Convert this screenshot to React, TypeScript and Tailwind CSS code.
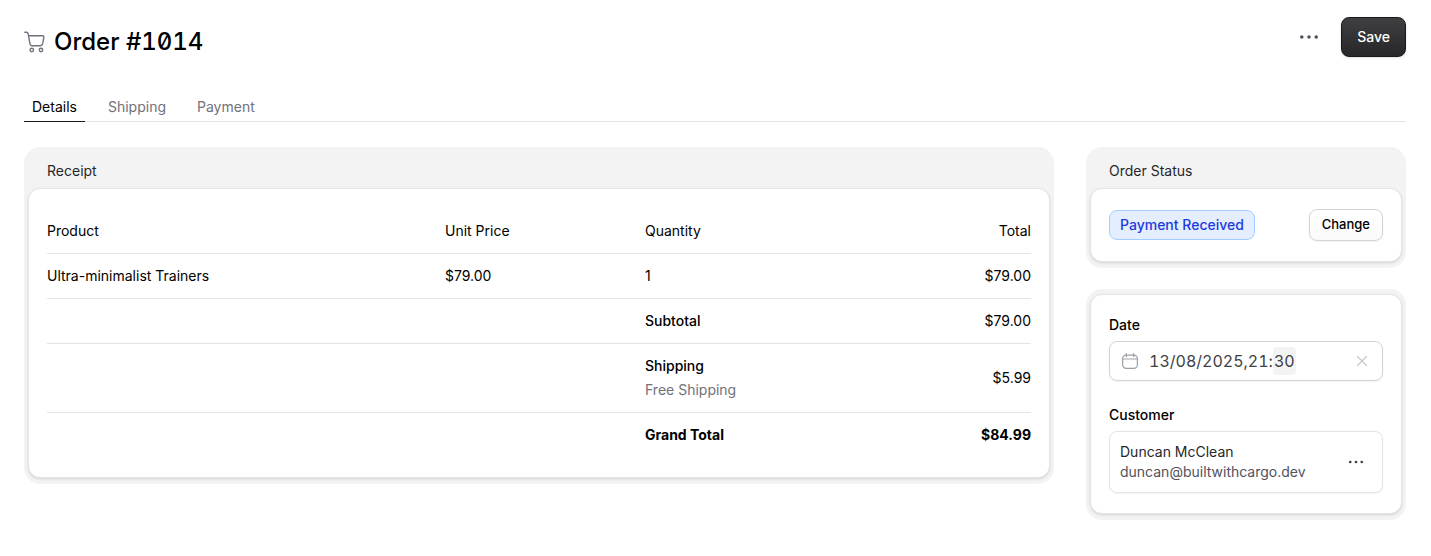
import type { ReactNode } from "react";

function CartIcon() {
  return (
    <svg viewBox="0 0 22 22" className="size-[22px] shrink-0" fill="none" stroke="#71717b" strokeWidth="1.4" strokeLinecap="round" strokeLinejoin="round" aria-hidden="true">
      <path d="M.8 1.2H2.5C3.6 1.2 4 1.8 4.2 2.8L5.9 12.5C6.1 14 6.8 14.7 8 14.7H16.3C17.7 14.7 18.4 14 18.7 12.7L19.8 6.4C20 5.2 19.6 4.8 18.6 4.8H4.6" />
      <circle cx="7.8" cy="19" r="1.7" />
      <circle cx="17" cy="19" r="1.7" />
    </svg>
  );
}

function CalendarIcon() {
  return (
    <svg viewBox="0 0 16 16" className="size-4 shrink-0" fill="none" stroke="#9f9fa9" strokeWidth="1.2" strokeLinecap="round" strokeLinejoin="round" aria-hidden="true">
      <rect x=".6" y="2.2" width="14.8" height="13.1" rx="3.6" />
      <path d="M.8 6H15.2M4.3.6V3.6M11.7.6V3.6" />
    </svg>
  );
}

function DotsIcon({ className, radius }: { className: string; radius: number }) {
  return (
    <svg viewBox="0 0 20 4" className={className} fill="currentColor" aria-hidden="true">
      <circle cx="2.8" cy="2" r={radius} />
      <circle cx="10" cy="2" r={radius} />
      <circle cx="17.2" cy="2" r={radius} />
    </svg>
  );
}

function Panel({ heading, children }: { heading?: string; children: ReactNode }) {
  return (
    <section className="rounded-2xl bg-[#f3f3f3] px-1 pb-[6px] pt-[5px]">
      {heading && <h2 className="px-[19px] pb-[7px] pt-[9px] text-sm leading-5 text-[#27272a]">{heading}</h2>}
      <div className="rounded-xl border border-[#e4e4e7] bg-white px-[18px] py-5 shadow-sm">{children}</div>
    </section>
  );
}

const tabs = ["Details", "Shipping", "Payment"];

function Tabs() {
  return (
    <nav className="flex gap-[15px] border-b border-[#e4e4e7]" role="tablist">
      {tabs.map((tab, i) => (
        <button
          key={tab}
          type="button"
          role="tab"
          aria-selected={i === 0}
          className={
            i === 0
              ? "-mb-px border-b border-[#18181b] px-2 pb-1 text-sm leading-5 text-black"
              : "-mb-px border-b border-transparent px-2 pb-1 text-sm leading-5 text-[#71717b]"
          }
        >
          {tab}
        </button>
      ))}
    </nav>
  );
}

function Receipt() {
  return (
    <table className="w-full table-fixed text-left text-sm leading-5 text-black">
      <thead>
        <tr className="border-b border-[#e4e4e7]">
          <th className="py-3 font-normal">Product</th>
          <th className="w-[200px] py-3 font-normal">Unit Price</th>
          <th className="w-[200px] py-3 font-normal">Quantity</th>
          <th className="w-[186px] py-3 text-right font-normal">Total</th>
        </tr>
      </thead>
      <tbody>
        <tr className="border-b border-[#e4e4e7]">
          <td className="py-3">Ultra-minimalist Trainers</td>
          <td className="py-3">$79.00</td>
          <td className="py-3">1</td>
          <td className="py-3 text-right">$79.00</td>
        </tr>
        <tr className="border-b border-[#e4e4e7]">
          <td colSpan={2} />
          <td className="py-3 font-medium">Subtotal</td>
          <td className="py-3 text-right">$79.00</td>
        </tr>
        <tr className="border-b border-[#e4e4e7]">
          <td colSpan={2} />
          <td className="py-3">
            <div className="font-medium">Shipping</div>
            <div className="mt-1 text-[#71717b]">Free Shipping</div>
          </td>
          <td className="py-3 text-right">$5.99</td>
        </tr>
        <tr className="font-bold">
          <td colSpan={2} />
          <td className="py-3">Grand Total</td>
          <td className="py-3 text-right">$84.99</td>
        </tr>
      </tbody>
    </table>
  );
}

const segments = [
  { label: "Day", value: "13", after: "/" },
  { label: "Month", value: "08", after: "/" },
  { label: "Year", value: "2025", after: "," },
  { label: "Hour", value: "21", after: ":" },
  { label: "Minute", value: "30", after: "" },
];

function DateField() {
  return (
    <fieldset>
      <legend className="text-sm font-medium leading-5 text-black">Date</legend>
      <div className="mt-[6px] flex h-10 items-center rounded-lg border border-[#d4d4d8] bg-white pl-3 pr-[14px] shadow-xs">
        <CalendarIcon />
        <div className="ml-[11px] flex flex-1 items-center text-base leading-7 text-[#3f3f46] tabular-nums">
          {segments.map((s) => (
            <span key={s.label} className="flex">
              <input
                aria-label={s.label}
                defaultValue={s.value}
                className={
                  s.label === "Minute"
                    ? "field-sizing-content rounded bg-[#f3f3f3] px-px outline-none"
                    : "field-sizing-content outline-none"
                }
              />
              {s.after && <span>{s.after}</span>}
            </span>
          ))}
        </div>
        <button type="button" aria-label="Clear date" className="text-[#c6c6cb]">
          <svg viewBox="0 0 12 12" className="size-3" fill="none" stroke="currentColor" strokeWidth="1.2" strokeLinecap="round" aria-hidden="true">
            <path d="M1.5 1.5L10.5 10.5M10.5 1.5L1.5 10.5" />
          </svg>
        </button>
      </div>
    </fieldset>
  );
}

export default function App() {
  return (
    <div className="bg-white pb-9 pl-6 pr-[25px] pt-[17px] font-['Inter',sans-serif] antialiased">
      <header className="flex items-start justify-between">
        <div className="flex items-center gap-2 pt-[9px]">
          <CartIcon />
          <h1 className="text-2xl font-medium leading-8 text-black slashed-zero tabular-nums">Order #1014</h1>
        </div>
        <div className="flex items-center gap-[22px]">
          <button type="button" aria-label="More actions" className="flex h-10 items-center text-[#52525c]">
            <DotsIcon className="h-1 w-5" radius={1.8} />
          </button>
          <button type="button" className="h-10 rounded-lg border border-[#18181b] bg-linear-to-b from-[#3f3f42] to-[#27272a] px-[15px] text-sm font-medium text-white shadow-sm">
            Save
          </button>
        </div>
      </header>
      <div className="mt-[39px]">
        <Tabs />
      </div>
      <main className="mt-[25px] flex items-start gap-8">
        <div className="min-w-0 flex-1">
          <Panel heading="Receipt">
            <Receipt />
          </Panel>
        </div>
        <aside className="flex w-80 shrink-0 flex-col gap-[21px]">
          <Panel heading="Order Status">
            <div className="flex items-center justify-between">
              <span className="rounded-lg border border-[#a3cdff] bg-[#e4eefe] px-[10px] py-1 text-sm font-medium leading-5 text-[#1c3bdc]">
                Payment Received
              </span>
              <button type="button" className="h-8 rounded-lg border border-[#d4d4d8] bg-linear-to-b from-white to-[#fafafa] px-3 text-[13px] font-medium text-black shadow-xs">
                Change
              </button>
            </div>
          </Panel>
          <Panel>
            <DateField />
            <div className="mt-6">
              <h3 className="text-sm font-medium leading-5 text-black">Customer</h3>
              <div className="mt-[6px] flex items-center justify-between rounded-lg border border-[#e4e4e7] py-[10px] pl-[10px] pr-[18px] text-sm leading-5 shadow-xs">
                <div>
                  <div className="text-[#27272a]">Duncan McClean</div>
                  <div className="text-[#52525c]">duncan@builtwithcargo.dev</div>
                </div>
                <button type="button" aria-label="Customer actions" className="flex items-center text-[#3f3f46]">
                  <DotsIcon className="h-1 w-4" radius={1.7} />
                </button>
              </div>
            </div>
          </Panel>
        </aside>
      </main>
    </div>
  );
}
